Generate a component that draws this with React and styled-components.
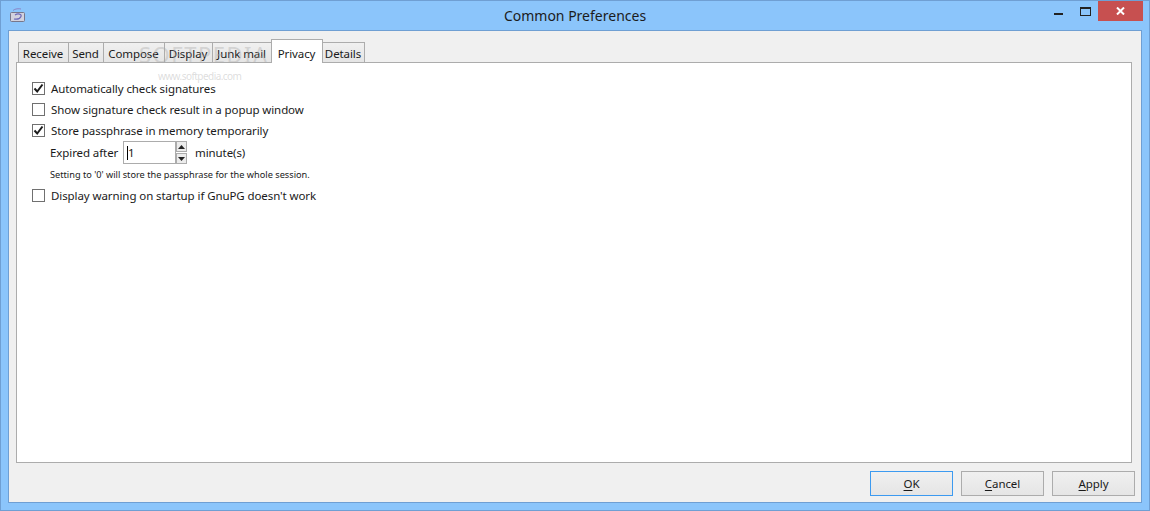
import React from "react";
import styled, { createGlobalStyle } from "styled-components";

const GlobalStyle = createGlobalStyle`
  html, body { margin: 0; padding: 0; background: #8bc5fb; }
  * { box-sizing: border-box; }
`;

const Window = styled.div`
  position: relative;
  width: 1150px;
  height: 511px;
  display: flex;
  flex-direction: column;
  background: #8bc5fb;
  border: 1px solid #6f9fd3;
  font-family: "Noto Sans", "Open Sans", sans-serif;
  font-size: 11.5px;
  letter-spacing: -0.09px;
  color: #1a1a1a;
  overflow: hidden;
`;

const TitleBar = styled.div`
  height: 29px;
  flex: none;
  display: grid;
  grid-template-columns: 1fr auto 1fr;
  align-items: start;
`;

const AppIcon = styled.svg`
  width: 16px;
  height: 16px;
  margin: 6px 0 0 9px;
`;

const Title = styled.div`
  font-size: 14px;
  letter-spacing: 0;
  line-height: 30px;
  color: #1c1c1c;
`;

const Controls = styled.div`
  justify-self: end;
  display: flex;
  align-items: flex-start;
  margin-right: 6px;
`;

const WindowGlyph = styled.svg`
  display: block;
  margin: ${(p) => p.$top}px ${(p) => p.$gap}px 0 0;
`;

const CloseButton = styled.div`
  width: 45px;
  height: 20px;
  display: flex;
  align-items: center;
  justify-content: center;
  background: #c75050;
`;

const Body = styled.div`
  flex: 1;
  margin: 0 7px 7px;
  background: #f0f0f0;
  border: 1px solid #6f9fd3;
  padding: 8px 9px 6px 7px;
  display: flex;
  flex-direction: column;
`;

const TabBar = styled.div`
  display: flex;
  align-items: flex-end;
  height: 24px;
  padding-left: 3px;
  margin-bottom: -1px;
  position: relative;
  z-index: 1;
`;

const Tab = styled.div`
  height: ${(p) => (p.$active ? 24 : 21)}px;
  width: ${(p) => p.$w}px;
  margin-left: -1px;
  padding-right: 1px;
  border: 1px solid #acacac;
  border-bottom: ${(p) => (p.$active ? "none" : "1px solid #acacac")};
  background: ${(p) => (p.$active ? "#fff" : "linear-gradient(#f0f0f0, #e5e5e5)")};
  text-align: center;
  line-height: ${(p) => (p.$active ? 27 : 22)}px;
  white-space: nowrap;
`;

const Panel = styled.div`
  flex: 1;
  background: #fff;
  border: 1px solid #acacac;
  padding: 15px 15px;
  display: flex;
  flex-direction: column;
`;

const CheckRow = styled.label`
  display: flex;
  align-items: center;
  gap: 6px;
  height: 21px;
`;

const Box = styled.span`
  width: 13px;
  height: 13px;
  flex: none;
  border: 1px solid #707070;
  background: #fff;
  display: flex;
  align-items: center;
  justify-content: center;
`;

const ExpiryRow = styled.div`
  display: flex;
  align-items: center;
  height: 23px;
  padding-left: 18px;
`;

const ExpiryLabel = styled.span`
  width: 73px;
`;

const SpinInput = styled.div`
  width: 53px;
  height: 23px;
  border: 1px solid #acacac;
  padding-left: 3px;
  display: flex;
  align-items: center;
`;

const Caret = styled.span`
  width: 1px;
  height: 14px;
  background: #000;
`;

const Spin = styled.div`
  width: 11px;
  height: 23px;
  display: flex;
  flex-direction: column;
  gap: 1px;
`;

const SpinButton = styled.div`
  flex: 1;
  border: 1px solid #acacac;
  background: #ececec;
  display: flex;
  align-items: center;
  justify-content: center;
`;

const Unit = styled.span`
  margin-left: 8px;
`;

const Hint = styled.div`
  font-size: 9.2px;
  letter-spacing: 0;
  height: 19px;
  line-height: 21px;
  padding-left: 18px;
  margin-bottom: 2px;
`;

const Footer = styled.div`
  display: flex;
  justify-content: flex-end;
  gap: 8px;
  margin-top: 8px;
  margin-right: -3px;
`;

const Button = styled.div`
  width: 83px;
  height: 25px;
  border: 1px solid ${(p) => (p.$primary ? "#3c9af0" : "#acacac")};
  background: linear-gradient(#f0f0f0, #e5e5e5);
  text-align: center;
  line-height: 24px;
  u { text-underline-offset: 2px; }
`;

const Watermark = styled.div`
  position: absolute;
  left: ${(p) => p.$x}px;
  top: ${(p) => p.$y}px;
  font-size: ${(p) => p.$size}px;
  color: rgba(170, 170, 170, 0.4);
  letter-spacing: ${(p) => p.$spacing}px;
  white-space: nowrap;
  pointer-events: none;
  z-index: 2;
`;

const tabs = [
  ["Receive", 51],
  ["Send", 36],
  ["Compose", 62],
  ["Display", 49],
  ["Junk mail", 60],
  ["Privacy", 52, true],
  ["Details", 43],
];

const Check = () => (
  <svg width="11" height="11" viewBox="0 0 11 11">
    <path d="M1.5 5.500 L4.200 8.500 L9.500 1.500" fill="none" stroke="#1c1c1c" strokeWidth="2" />
  </svg>
);

const CheckOption = ({ checked, children }) => (
  <CheckRow>
    <Box>{checked && <Check />}</Box>
    {children}
  </CheckRow>
);

const Arrow = ({ down }) => (
  <svg width="7" height="4" viewBox="0 0 7 4">
    <path d={down ? "M0 0H7L3.500 4Z" : "M0 4H7L3.500 0Z"} fill="#222" />
  </svg>
);

const App = () => (
  <>
    <GlobalStyle />
    <Window>
      <TitleBar>
        <AppIcon viewBox="0 0 16 16">
          <path d="M3 3.500c2-2 6-2 8-1.500" fill="none" stroke="#8a86c8" strokeWidth="1" />
          <rect x="0.500" y="5.500" width="14" height="9" rx="1" fill="#d2d2de" stroke="#77778a" />
          <path d="M5 8c3-2 7-1 6 1.500s-4 3-7 2.500" fill="none" stroke="#6b68b8" strokeWidth="1.200" />
        </AppIcon>
        <Title>Common Preferences</Title>
        <Controls>
          <WindowGlyph width="9" height="2" viewBox="0 0 9 2" $top={12} $gap={17}>
            <rect width="9" height="2" fill="#222" />
          </WindowGlyph>
          <WindowGlyph width="11" height="9" viewBox="0 0 11 9" $top={6} $gap={7}>
            <rect x="0.500" y="0.500" width="10" height="8" fill="none" stroke="#222" />
            <rect width="11" height="2" fill="#222" />
          </WindowGlyph>
          <CloseButton>
            <svg width="9" height="8" viewBox="0 0 9 8">
              <path d="M1 0.500 L8 7.500 M8 0.500 L1 7.500" stroke="#fff" strokeWidth="2" />
            </svg>
          </CloseButton>
        </Controls>
      </TitleBar>
      <Body>
        <TabBar>
          {tabs.map(([label, width, active]) => (
            <Tab key={label} $w={width} $active={active}>
              {label}
            </Tab>
          ))}
        </TabBar>
        <Panel>
          <CheckOption checked>Automatically check signatures</CheckOption>
          <CheckOption>Show signature check result in a popup window</CheckOption>
          <CheckOption checked>Store passphrase in memory temporarily</CheckOption>
          <ExpiryRow>
            <ExpiryLabel>Expired after</ExpiryLabel>
            <SpinInput>
              <Caret />1
            </SpinInput>
            <Spin>
              <SpinButton>
                <Arrow />
              </SpinButton>
              <SpinButton>
                <Arrow down />
              </SpinButton>
            </Spin>
            <Unit>minute(s)</Unit>
          </ExpiryRow>
          <Hint>Setting to '0' will store the passphrase for the whole session.</Hint>
          <CheckOption>Display warning on startup if GnuPG doesn't work</CheckOption>
        </Panel>
        <Footer>
          <Button $primary>
            <u>O</u>K
          </Button>
          <Button>
            <u>C</u>ancel
          </Button>
          <Button>
            <u>A</u>pply
          </Button>
        </Footer>
      </Body>
      <Watermark $x={138} $y={38} $size={22} $spacing={1.500}>
        SOFTPEDIA
      </Watermark>
      <Watermark $x={157} $y={68} $size={10} $spacing={-0.550}>
        www.softpedia.com
      </Watermark>
    </Window>
  </>
);

export default App;
